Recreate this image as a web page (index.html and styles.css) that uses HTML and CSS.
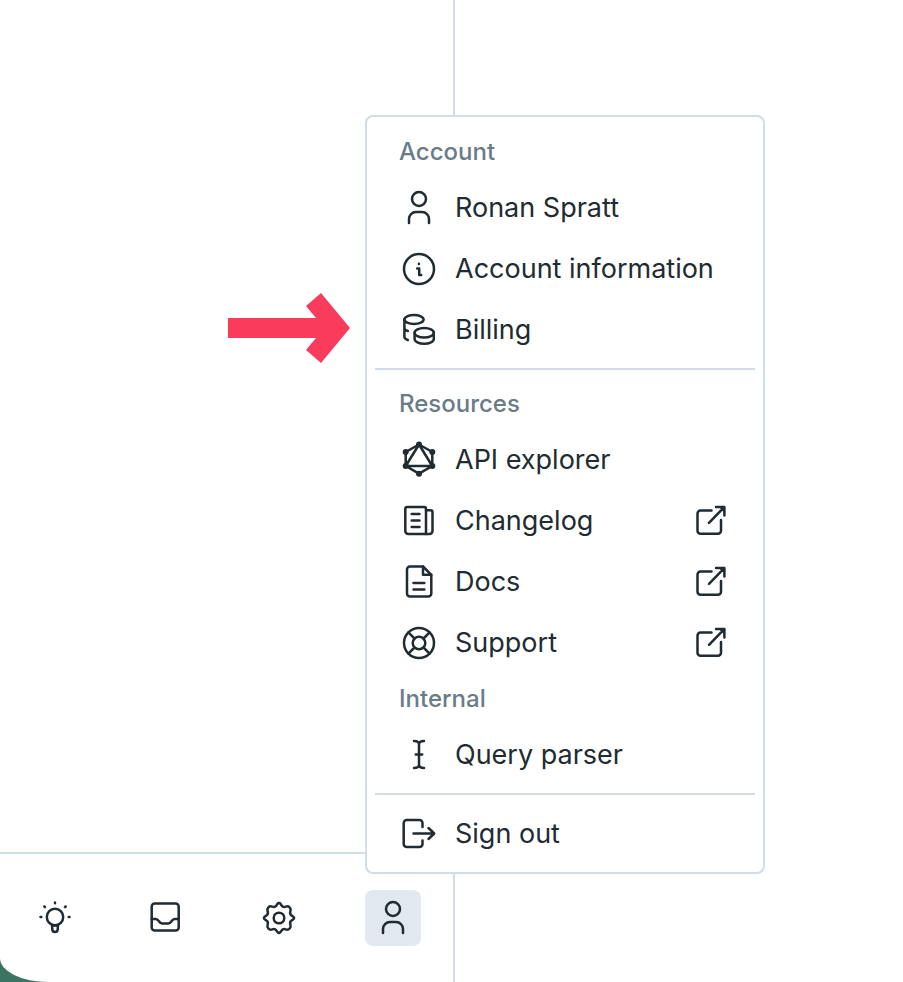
FILE: index.html
```html
<!DOCTYPE html>
<html lang="en">
<head>
	<meta charset="UTF-8">
	<meta name="viewport" content="width=device-width, initial-scale=1">
	<title>Account menu</title>
	<link rel="stylesheet" href="styles.css">
</head>
<body>
	<!-- shared icons -->
	<svg class="sprite" aria-hidden="true">
		<symbol id="icon-user" viewBox="0 0 40 40">
			<circle cx="20" cy="11" r="7"/>
			<path d="M10 35v-4a7 7 0 0 1 7-7h6a7 7 0 0 1 7 7v4"/>
		</symbol>
		<symbol id="icon-external" viewBox="0 0 40 40">
			<path d="M20.5 9.5H9.5a3 3 0 0 0-3 3v17.3a3 3 0 0 0 3 3H27a3 3 0 0 0 3-3V19"/>
			<path d="M18 21.8L33 6.3M25 6h8.4v8.6M30 6.5h3v3z"/>
		</symbol>
	</svg>

	<div class="shell">
		<aside class="sidebar">
			<div class="sidebar-body"></div>
			<nav class="sidebar-footer" aria-label="Tools">
				<button class="tool" type="button" aria-label="What's new">
					<svg class="icon" viewBox="0 0 40 40">
						<circle cx="21" cy="19" r="8.2"/>
						<path d="M18 27l.3 4.300a2.700 2.700 0 0 0 5.400 0L24 27M18 27.500h6M21 4.500v.8M10.300 8.500l.7.700M31.700 8.500l-.7.700M6.500 19h.8M34.700 19h.8"/>
					</svg>
				</button>
				<button class="tool" type="button" aria-label="Inbox">
					<svg class="icon" viewBox="0 0 40 40">
						<rect x="4.7" y="5.5" width="27" height="27" rx="3"/>
						<path d="M4.7 21h4.1c3.2 0 3 4.500 6.400 4.500h6c3.400 0 3.200-4.500 6.400-4.500h4.100"/>
					</svg>
				</button>
				<button class="tool" type="button" aria-label="Settings">
					<svg class="icon" viewBox="0 0 40 40">
						<g transform="translate(19 20)">
							<path id="cog" d="M0-15C1.8-15 2-13.2 2.8-12.2C3.8-10.8 5.2-10.9 6.8-11.4C9.8-12.4 12.4-9.8 11.4-6.8C10.9-5.2 10.8-3.8 12.2-2.8C13.2-2 15-1.8 15 0"/>
							<use href="#cog" transform="rotate(90)"/>
							<use href="#cog" transform="rotate(180)"/>
							<use href="#cog" transform="rotate(270)"/>
							<circle r="5.3"/>
						</g>
					</svg>
				</button>
				<div class="account">
					<button class="tool active" type="button" aria-label="Account" aria-expanded="true">
						<svg class="icon"><use href="#icon-user"/></svg>
					</button>

					<div class="menu">
						<h2 class="menu-title">Account</h2>
						<a class="menu-item" href="#">
							<svg class="icon"><use href="#icon-user"/></svg>
							<span>Ronan Spratt</span>
						</a>
						<a class="menu-item" href="#">
							<svg class="icon" viewBox="0 0 40 40">
								<circle cx="20" cy="20" r="15"/>
								<path d="M18.2 19.5h2v6.500h2M19.9 14.7v.2"/>
							</svg>
							<span>Account information</span>
						</a>
						<a class="menu-item" href="#">
							<svg class="icon" viewBox="0 0 40 40">
								<ellipse cx="15" cy="9.5" rx="9.6" ry="4.5"/>
								<path d="M5.4 9.5v17.5c0 1.2 1.2 2.2 3.4 3M5.4 18c0 1.3 1.2 2.3 3.400 3"/>
								<ellipse cx="25.2" cy="22.8" rx="9.6" ry="4.8"/>
								<path d="M15.6 22.8v6.2c0 2.600 4.300 4.700 9.600 4.700s9.600-2.100 9.600-4.700v-6.200"/>
							</svg>
							<span>Billing</span>
						</a>

						<hr class="menu-line">

						<h2 class="menu-title">Resources</h2>
						<a class="menu-item" href="#">
							<svg class="icon" viewBox="0 0 40 40">
								<path d="M20 4.500L33.300 12v14L20 33.700 6.700 26V12zM20 4.500L33.300 26H6.700z"/>
								<g class="dots">
									<circle cx="20" cy="4.5" r="3"/>
									<circle cx="33.3" cy="12" r="3"/>
									<circle cx="33.3" cy="26" r="3"/>
									<circle cx="20" cy="33.7" r="3"/>
									<circle cx="6.7" cy="26" r="3"/>
									<circle cx="6.7" cy="12" r="3"/>
								</g>
							</svg>
							<span>API explorer</span>
						</a>
						<a class="menu-item" href="#">
							<svg class="icon" viewBox="0 0 40 40">
								<path d="M27 33H9.300a3 3 0 0 1-3-3V8a2 2 0 0 1 2-2H25a2 2 0 0 1 2 2z"/>
								<path d="M27 9.200h4.500a2 2 0 0 1 2 2V30a3 3 0 0 1-3 3H27M12.700 13h7.800M12.700 19.500h7.800M12.700 26h7.800"/>
							</svg>
							<span>Changelog</span>
							<svg class="icon external"><use href="#icon-external"/></svg>
						</a>
						<a class="menu-item" href="#">
							<svg class="icon" viewBox="0 0 40 40">
								<path d="M24 4.500H11a3 3 0 0 0-3 3V31.500a3 3 0 0 0 3 3h18.300a3 3 0 0 0 3-3V12.800z"/>
								<path d="M24 4.500V12.800h8.300M14.500 21h10.800M14.500 27.500h10.800"/>
							</svg>
							<span>Docs</span>
							<svg class="icon external"><use href="#icon-external"/></svg>
						</a>
						<a class="menu-item" href="#">
							<svg class="icon" viewBox="0 0 40 40">
								<circle cx="20" cy="20" r="15"/>
								<circle cx="20" cy="20" r="6.3"/>
								<path d="M9.4 9.4l6.1 6.1M30.6 9.4l-6.1 6.1M9.4 30.6l6.1-6.1M30.6 30.6l-6.1-6.1"/>
							</svg>
							<span>Support</span>
							<svg class="icon external"><use href="#icon-external"/></svg>
						</a>

						<h2 class="menu-title">Internal</h2>
						<a class="menu-item" href="#">
							<svg class="icon" viewBox="0 0 40 40">
								<path d="M15 6c3 0 5 1 5 3.500c0-2.500 2-3.500 5-3.500M20 9v20M15 33c3 0 5-1 5-3.500c0 2.500 2 3.500 5 3.500M16.800 19.500h6.400"/>
							</svg>
							<span>Query parser</span>
						</a>

						<hr class="menu-line">

						<a class="menu-item" href="#">
							<svg class="icon" viewBox="0 0 40 40">
								<path d="M23.500 13V9a3 3 0 0 0-3-3H7.700a3 3 0 0 0-3 3v21a3 3 0 0 0 3 3h12.800a3 3 0 0 0 3-3V26.500"/>
								<path d="M14.500 19.500h20.500M29.500 14l5.700 5.500-5.700 5.500"/>
							</svg>
							<span>Sign out</span>
						</a>

						<!-- pointer to Billing -->
						<svg class="pointer" viewBox="0 0 122 70" aria-hidden="true">
							<path d="M0 25h88L78 13 93 0l29 35-29 35-15-13 10-12H0z"/>
						</svg>
					</div>
				</div>
			</nav>
		</aside>
		<main class="content"></main>
	</div>
</body>
</html>
```

FILE: styles.css
```css
* {
	box-sizing: border-box;
}

body {
	margin: 0;
	background: #3b7463;
	color: #212b32;
	font-family: Inter, "Liberation Sans", sans-serif;
	font-size: 27px;
}

.sprite {
	display: none;
}

.shell {
	display: flex;
	min-height: 100vh;
	background: #fff;
	border-bottom-left-radius: 48px 24px;
}

.sidebar {
	display: flex;
	flex-direction: column;
	flex: none;
	width: 455px;
	border-right: 2px solid #d1dce7;
}

.sidebar-body,
.content {
	flex: 1;
}

.sidebar-footer {
	display: flex;
	justify-content: space-between;
	padding: 36px 32px 36px 26px;
	border-top: 2px solid #d1dce7;
}

.tool {
	display: flex;
	align-items: center;
	justify-content: center;
	width: 56px;
	height: 56px;
	padding: 0;
	border: 0;
	border-radius: 8px;
	background: none;
	color: inherit;
	cursor: pointer;
}

.tool:hover,
.tool.active {
	background: #e1e8ef;
}

.icon {
	flex: none;
	width: 40px;
	height: 40px;
	fill: none;
	stroke: currentColor;
	stroke-width: 2.5;
	stroke-linecap: round;
	stroke-linejoin: round;
}

.dots {
	fill: currentColor;
	stroke: none;
}

/* menu opens above the account button */
.account {
	position: relative;
}

.menu {
	position: absolute;
	left: 0;
	bottom: 100%;
	width: 400px;
	margin-bottom: 16px;
	padding: 9px 8px 8px;
	border: 2px solid #d1dce7;
	border-radius: 8px;
	background: #fff;
}

.menu-title {
	margin: 0;
	padding: 0 24px;
	color: #6a7b89;
	font-size: 24px;
	font-weight: 500;
	line-height: 51px;
}

.menu-item {
	display: flex;
	align-items: center;
	gap: 16px;
	padding: 0 24px;
	border-radius: 4px;
	color: inherit;
	line-height: 61px;
	text-decoration: none;
	white-space: nowrap;
}

.menu-item:hover {
	background: #f3f6f9;
}

.menu-line {
	height: 2px;
	margin: 8px 0;
	border: 0;
	background: #d1dce7;
}

.external {
	margin-left: auto;
}

.pointer {
	position: absolute;
	top: 176px;
	right: 100%;
	width: 122px;
	height: 70px;
	margin-right: 17px;
	fill: #f93c5b;
}
```
